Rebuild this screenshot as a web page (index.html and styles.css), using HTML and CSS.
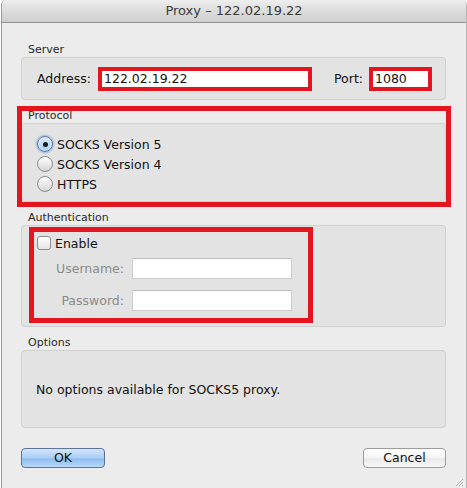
FILE: index.html
```html
<!DOCTYPE html>
<html>
<head>
<meta charset="utf-8">
<link rel="stylesheet" href="styles.css">
</head>
<body>
<div class="window">
  <div class="titlebar">Proxy – 122.02.19.22</div>
  <div class="content">
    <section class="group">
      <div class="group-label">Server</div>
      <div class="box server-box">
        <span class="lbl addr-lbl">Address:</span>
        <div class="field red-field addr-field">122.02.19.22</div>
        <span class="spacer"></span>
        <span class="lbl port-lbl">Port:</span>
        <div class="field red-field port-field">1080</div>
      </div>
    </section>

    <section class="group highlighted">
      <div class="group-label">Protocol</div>
      <div class="box protocol-box">
        <div class="radio-row"><span class="radio checked"><span class="dot"></span></span><span class="opt">SOCKS Version 5</span></div>
        <div class="radio-row"><span class="radio"></span><span class="opt">SOCKS Version 4</span></div>
        <div class="radio-row"><span class="radio"></span><span class="opt">HTTPS</span></div>
      </div>
    </section>

    <section class="group">
      <div class="group-label">Authentication</div>
      <div class="box auth-box">
        <div class="auth-red">
          <div class="check-row"><span class="checkbox"></span><span class="opt">Enable</span></div>
          <div class="auth-grid">
            <span class="dim-lbl">Username:</span>
            <div class="text-input"></div>
            <span class="dim-lbl">Password:</span>
            <div class="text-input"></div>
          </div>
        </div>
      </div>
    </section>

    <section class="group">
      <div class="group-label">Options</div>
      <div class="box options-box">No options available for SOCKS5 proxy.</div>
    </section>

    <div class="buttons">
      <button class="btn btn-ok">OK</button>
      <button class="btn btn-cancel">Cancel</button>
    </div>
  </div>
  <svg class="grip" width="10" height="10" viewBox="0 0 10 10"><path d="M9 2 L2 9 M9 5 L5 9 M9 8 L8 9" stroke="#b5b5b5" stroke-width="1" fill="none"/></svg>
</div>
</body>
</html>
```

FILE: styles.css
```css
* { box-sizing: border-box; }
html, body { margin: 0; padding: 0; }
body {
  background: #ffffff;
  font-family: "DejaVu Sans", "Liberation Sans", sans-serif;
  color: #111;
}
.window {
  position: relative;
  width: 466px;
  height: 488px;
  margin-left: 1px;
  background: #ececec;
  border-left: 1px solid #9b9b9b;
  border-right: 1px solid #b4b4b4;
  border-radius: 5px 5px 0 0;
  overflow: hidden;
}
.titlebar {
  height: 23px;
  line-height: 22px;
  text-align: center;
  font-size: 13px;
  color: #3c3c3c;
  background: linear-gradient(#eeeeee, #d9d9d9 60%, #cfcfcf);
  border-bottom: 1px solid #8f8f8f;
}
.content {
  display: flex;
  flex-direction: column;
  gap: 9px;
  padding: 20px 20px 0 19px;
}
.group { position: relative; }
.group-label {
  font-size: 11px;
  line-height: 14px;
  height: 14px;
  padding-left: 7px;
  color: #2a2a2a;
}
.box {
  background: #e3e3e3;
  border: 1px solid #d0d0d0;
  border-radius: 4px;
}
.server-box {
  height: 43px;
  display: flex;
  align-items: center;
  padding: 0 13px 0 15px;
  font-size: 12.5px;
}
.lbl { color: #111; }
.addr-lbl { margin-right: 7px; }
.port-lbl { margin-right: 6px; }
.spacer { flex: 1; }
.field {
  background: #fff;
  height: 24px;
  line-height: 16px;
  font-size: 12.5px;
  padding-left: 2px;
}
.red-field { border: 4px solid #e3161f; }
.addr-field { width: 214px; }
.port-field { width: 63px; }

.highlighted::after {
  content: "";
  position: absolute;
  left: -4px;
  right: -5px;
  top: -3px;
  bottom: -5px;
  border: 5px solid #e3161f;
  pointer-events: none;
}
.protocol-box {
  height: 79px;
  padding: 10px 0 0 15px;
}
.radio-row {
  display: flex;
  align-items: center;
  height: 20px;
  font-size: 12.5px;
}
.radio {
  width: 16px;
  height: 16px;
  border-radius: 50%;
  border: 1px solid #8d8d8d;
  background: linear-gradient(#ffffff, #e6e6e6 60%, #d4d4d4);
  margin-right: 4px;
  display: flex;
  align-items: center;
  justify-content: center;
  flex: none;
}
.radio.checked {
  border-color: #5a78a6;
  background: radial-gradient(circle at 50% 70%, #a7cdf5, #d9e9fb 70%);
  box-shadow: 0 0 2px 1px rgba(90, 140, 210, 0.6);
}
.dot {
  width: 5px;
  height: 5px;
  border-radius: 50%;
  background: #1c1c1c;
}
.opt { color: #111; }

.auth-box {
  height: 102px;
  padding: 1px 0 0 7px;
}
.auth-red {
  width: 284px;
  height: 96px;
  border: 5px solid #e3161f;
  padding: 1px 0 0 3px;
}
.check-row {
  display: flex;
  align-items: center;
  height: 20px;
  font-size: 12.5px;
}
.checkbox {
  width: 14px;
  height: 14px;
  border: 1px solid #8d8d8d;
  border-radius: 3px;
  background: linear-gradient(#ffffff, #e4e4e4);
  margin-right: 4px;
  flex: none;
}
.auth-grid {
  margin-top: 5px;
  margin-left: -3px;
  display: grid;
  grid-template-columns: 90px 160px;
  column-gap: 8px;
  row-gap: 11px;
  align-items: center;
}
.dim-lbl {
  text-align: right;
  font-size: 12.5px;
  color: #8a8a8a;
}
.text-input {
  height: 21px;
  background: #fff;
  border: 1px solid #cdcdcd;
  border-top-color: #bdbdbd;
}

.options-box {
  height: 78px;
  display: flex;
  align-items: center;
  padding-left: 14px;
  font-size: 12.5px;
  color: #111;
}

.buttons {
  display: flex;
  justify-content: space-between;
  margin-top: 11px;
}
.btn {
  height: 20px;
  border-radius: 4px;
  font-family: "DejaVu Sans", "Liberation Sans", sans-serif;
  font-size: 12.5px;
  color: #111;
  padding: 0;
  line-height: 18px;
}
.btn-ok {
  width: 84px;
  border: 1px solid #5b7497;
  background: linear-gradient(#d3e6fb, #a9cdf4 50%, #8dbdf0 55%, #b8d8f8);
}
.btn-cancel {
  width: 83px;
  border: 1px solid #9c9c9c;
  background: linear-gradient(#ffffff, #f4f4f4 50%, #e9e9e9 55%, #f7f7f7);
}
.grip {
  position: absolute;
  right: 2px;
  bottom: 1px;
}
```
